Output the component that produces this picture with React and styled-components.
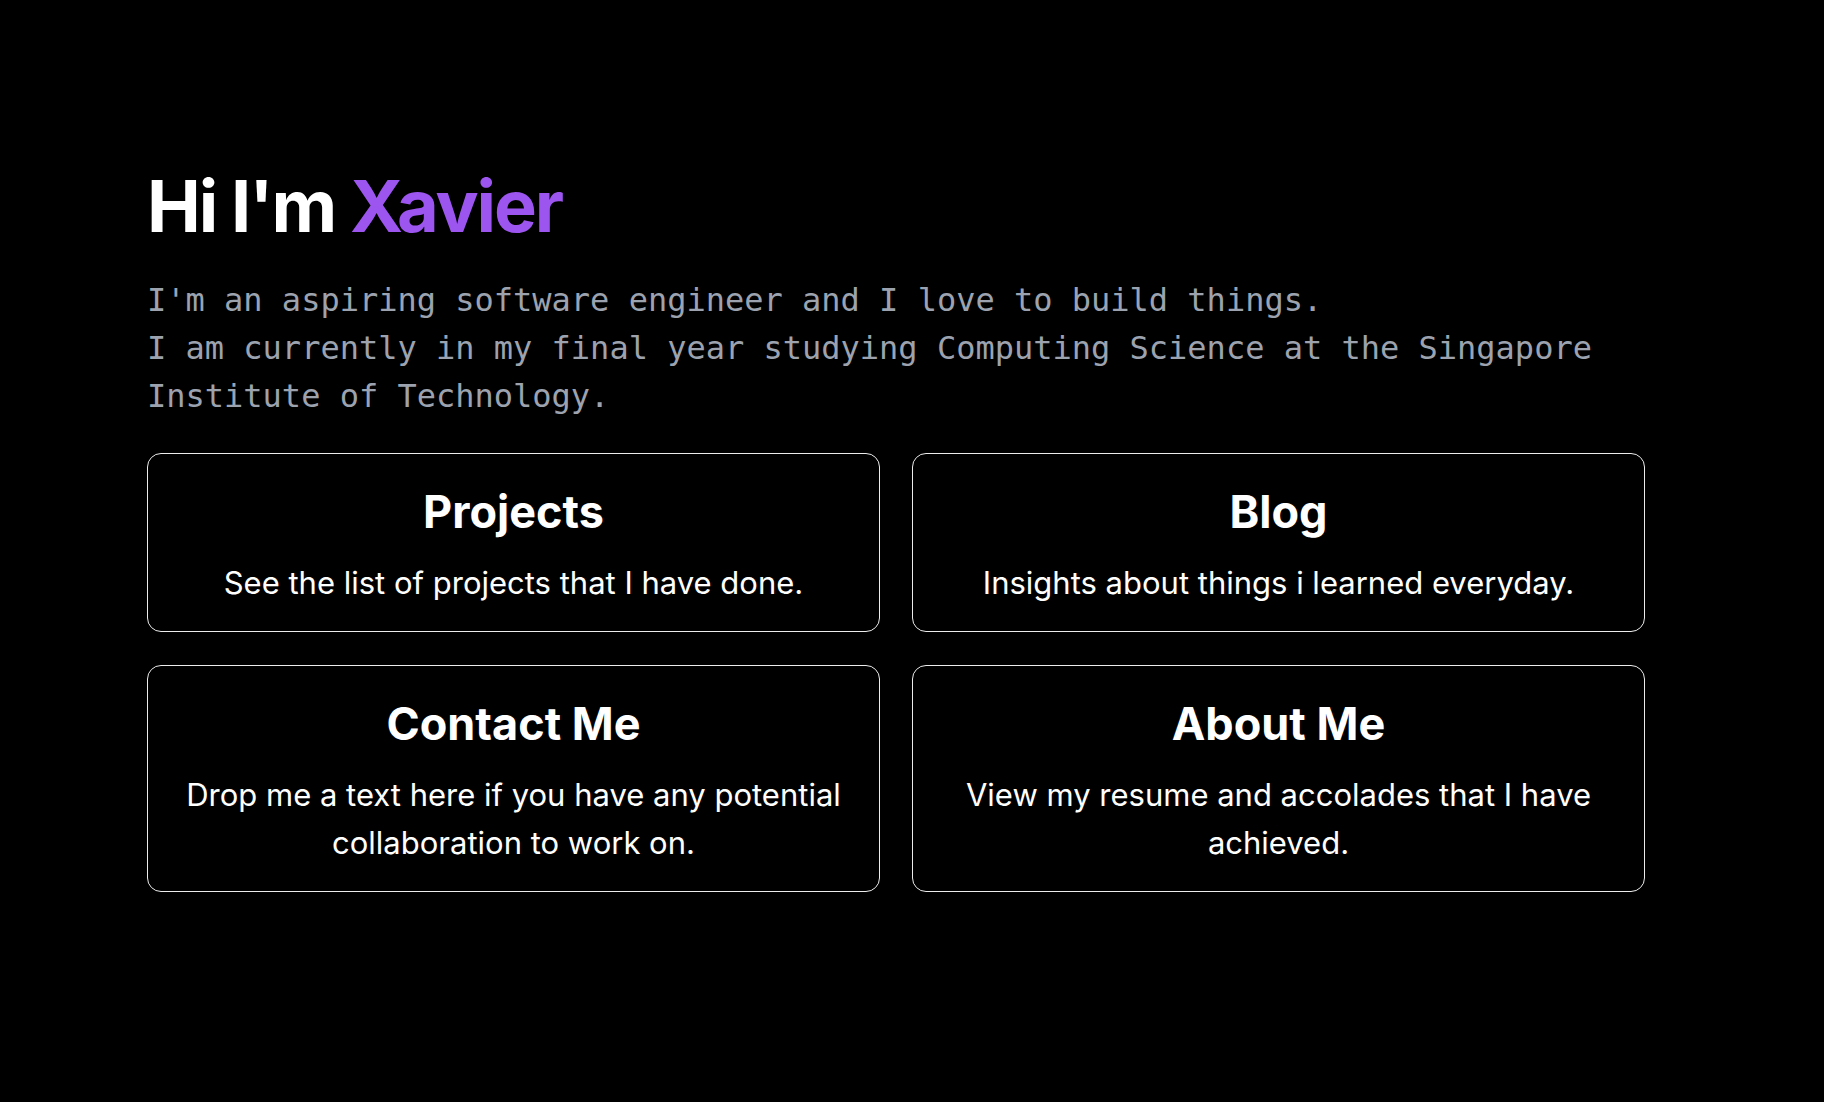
import React from "react";
import styled, { createGlobalStyle } from "styled-components";

const Global = createGlobalStyle`
  html, body { margin: 0; padding: 0; background: #000; }
  body { font-family: Inter, "Noto Sans", sans-serif; color: #fff; }
`;

const Page = styled.main`
  min-height: 1102px;
  background: #000;
  padding: 170px 0 0 147px;
  box-sizing: border-box;
`;

const Content = styled.div`
  width: 1498px;
  display: flex;
  flex-direction: column;
`;

const Title = styled.h1`
  margin: 0;
  font-size: 72px;
  line-height: 72px;
  font-weight: 700;
  letter-spacing: -2.1px;
  color: #fff;
`;

const Accent = styled.span`
  color: #9c55ee;
`;

const Intro = styled.p`
  margin: 34px 0 0;
  font-family: "DejaVu Sans Mono", "Liberation Mono", monospace;
  font-size: 32px;
  line-height: 48px;
  color: #9ca3af;
`;

const Grid = styled.div`
  margin-top: 33px;
  display: grid;
  grid-template-columns: 1fr 1fr;
  column-gap: 32px;
  row-gap: 33px;
`;

const Card = styled.a`
  display: flex;
  flex-direction: column;
  align-items: center;
  text-align: center;
  border: 1px solid #ececec;
  border-radius: 14px;
  padding: 28px 32px 24px;
  text-decoration: none;
  color: #fff;
  cursor: pointer;
`;

const CardTitle = styled.h2`
  margin: 0;
  font-size: 45px;
  line-height: 60px;
  font-weight: 700;
  letter-spacing: 0;
`;

const CardText = styled.p`
  margin: 17px 0 0;
  font-size: 31px;
  line-height: 48px;
  font-weight: 400;
`;

const cards = [
  { title: "Projects", text: "See the list of projects that I have done." },
  { title: "Blog", text: "Insights about things i learned everyday." },
  { title: "Contact Me", text: "Drop me a text here if you have any potential collaboration to work on." },
  { title: "About Me", text: "View my resume and accolades that I have achieved." },
];

export default function App() {
  return (
    <>
      <Global />
      <Page>
        <Content>
          <Title>
            Hi I'm <Accent>Xavier</Accent>
          </Title>
          <Intro>
            I'm an aspiring software engineer and I love to build things.
            <br />
            I am currently in my final year studying Computing Science at the Singapore Institute of Technology.
          </Intro>
          <Grid>
            {cards.map((c) => (
              <Card key={c.title}>
                <CardTitle>{c.title}</CardTitle>
                <CardText>{c.text}</CardText>
              </Card>
            ))}
          </Grid>
        </Content>
      </Page>
    </>
  );
}
